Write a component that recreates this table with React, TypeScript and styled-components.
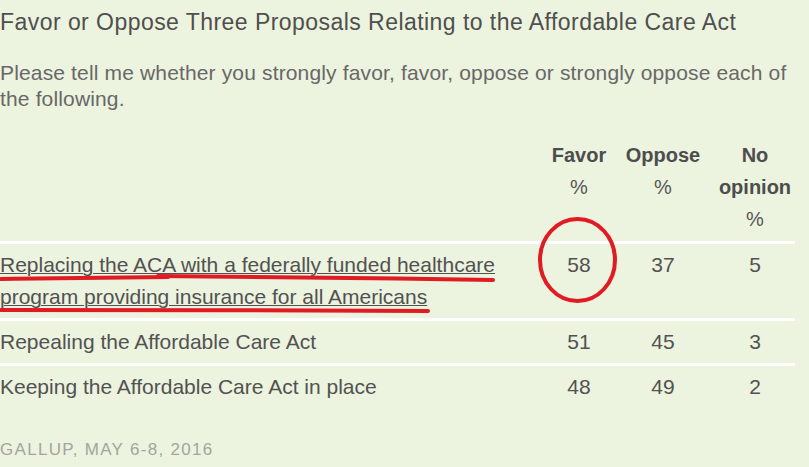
import styled, { createGlobalStyle } from "styled-components";

type Row = {
  label: string[];
  favor: number;
  oppose: number;
  noOpinion: number;
  link?: boolean;
};

const rows: Row[] = [
  {
    label: [
      "Replacing the ACA with a federally funded healthcare",
      "program providing insurance for all Americans",
    ],
    favor: 58,
    oppose: 37,
    noOpinion: 5,
    link: true,
  },
  { label: ["Repealing the Affordable Care Act"], favor: 51, oppose: 45, noOpinion: 3 },
  { label: ["Keeping the Affordable Care Act in place"], favor: 48, oppose: 49, noOpinion: 2 },
];

const App = () => {
  return (
    <>
      <GlobalStyle />
      <Page>
        <Title>Favor or Oppose Three Proposals Relating to the Affordable Care Act</Title>
        <Question>
          Please tell me whether you strongly favor, favor, oppose or strongly oppose each of
          the following.
        </Question>
        <Table>
          <HeadRow>
            <HeadCell />
            <HeadCell>
              Favor
              <Pct>%</Pct>
            </HeadCell>
            <HeadCell>
              Oppose
              <Pct>%</Pct>
            </HeadCell>
            <HeadCell>
              No opinion
              <Pct>%</Pct>
            </HeadCell>
          </HeadRow>
          {rows.map((r) => (
            <DataRow key={r.label[0]}>
              <Label $link={r.link}>
                {r.label.map((line, i) => (
                  <span key={i}>
                    {line}
                    {i < r.label.length - 1 && <br />}
                  </span>
                ))}
              </Label>
              <Num>{r.favor}</Num>
              <Num>{r.oppose}</Num>
              <Num>{r.noOpinion}</Num>
            </DataRow>
          ))}
        </Table>
        <Source>Gallup, May 6-8, 2016</Source>

        {/* hand-drawn red marks over the screenshot */}
        <Marks width="809" height="467" viewBox="0 0 809 467">
          <ellipse cx="577.5" cy="260" rx="37.5" ry="41" />
          <path d="M1 279 C60 278 120 278 168 277" />
          <path d="M158 276 C260 277 380 278 493 280" />
          <path d="M1 310 C120 310 300 310 428 311" />
        </Marks>
      </Page>
    </>
  );
};

export default App;

// ----style----
const GlobalStyle = createGlobalStyle`
  html, body {
    margin: 0;
    padding: 0;
    background: #ecf3de;
  }
  body {
    font-family: "Liberation Sans", Arial, sans-serif;
    color: #4f4f4f;
  }
`;

const Page = styled.div`
  position: relative;
  width: 809px;
  height: 467px;
  overflow: hidden;
  padding-top: 8px;
  box-sizing: border-box;
`;

const Title = styled.h1`
  margin: 0;
  font-size: 23px;
  font-weight: normal;
  letter-spacing: 0.45px;
  line-height: 28px;
  color: #4f4f4f;
`;

const Question = styled.p`
  margin: 24px 0 0 0;
  width: 800px;
  font-size: 21px;
  letter-spacing: 0.15px;
  line-height: 26px;
  color: #686868;
`;

const Table = styled.div`
  width: 795px;
  margin-top: 27px;
`;

const HeadRow = styled.div`
  display: grid;
  grid-template-columns: 1fr 64px 104px 80px;
  padding-bottom: 6px;
  border-bottom: 3px solid #fff;
`;

const HeadCell = styled.div`
  font-size: 20px;
  font-weight: bold;
  line-height: 32px;
  text-align: center;
  color: #4d4d4d;
`;

const Pct = styled.div`
  font-weight: normal;
  color: #575757;
`;

const DataRow = styled.div`
  display: grid;
  grid-template-columns: 1fr 64px 104px 80px;
  align-items: start;
  padding: 5px 0 5px;
  border-bottom: 3px solid #fff;

  &:last-child {
    border-bottom: none;
  }
`;

const Label = styled.div<{ $link?: boolean }>`
  font-size: 21px;
  line-height: 32px;
  color: #525252;
  text-decoration: ${(p) => (p.$link ? "underline" : "none")};
  text-decoration-thickness: 1px;
`;

const Num = styled.div`
  font-size: 21px;
  line-height: 32px;
  text-align: center;
  color: #525252;
`;

const Source = styled.div`
  margin-top: 32px;
  font-size: 17px;
  letter-spacing: 1.3px;
  text-transform: uppercase;
  color: #a3a59e;
`;

const Marks = styled.svg`
  position: absolute;
  left: 0;
  top: 0;
  pointer-events: none;

  ellipse,
  path {
    fill: none;
    stroke: #e01b24;
    stroke-width: 4;
    stroke-linecap: round;
  }
`;
